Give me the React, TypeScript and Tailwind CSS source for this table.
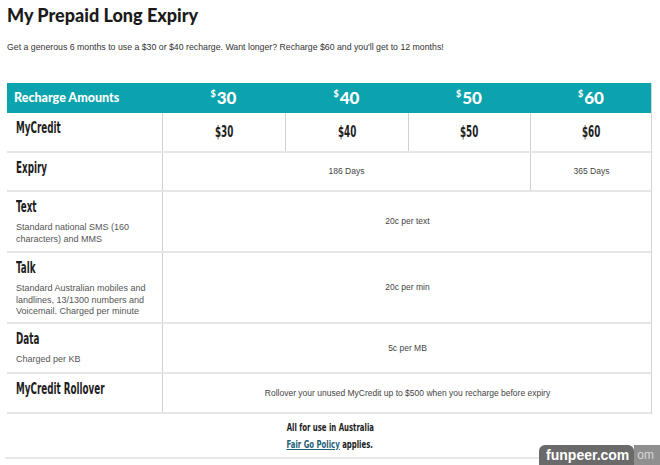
import React from "react";

interface Row {
  label: string;
  desc?: string[];
  value: string;
  h: string;
}

const amounts = ["30", "40", "50", "60"];

const rows: Row[] = [
  {
    label: "Text",
    desc: ["Standard national SMS (160", "characters) and MMS"],
    value: "20c per text",
    h: "h-[61px]",
  },
  {
    label: "Talk",
    desc: ["Standard Australian mobiles and", "landlines, 13/1300 numbers and", "Voicemail. Charged per minute"],
    value: "20c per min",
    h: "h-[71px]",
  },
  { label: "Data", desc: ["Charged per KB"], value: "5c per MB", h: "h-[50px]" },
];

const cond = "font-['DejaVu_Sans_Condensed','DejaVu_Sans',sans-serif] font-bold";
const body = "font-['Liberation_Sans',Arial,sans-serif]";

// 좁은 굵은 글씨 (라벨용)
const Label: React.FC<{ children: React.ReactNode }> = ({ children }) => (
  <div className={`whitespace-nowrap origin-left scale-x-[0.65] text-[15px] leading-[17px] text-[#1e1e1e] ${cond}`}>
    {children}
  </div>
);

const App: React.FC = () => {
  return (
    /*전체 페이지*/
    <div className={`relative w-[660px] h-[465px] bg-white overflow-hidden text-[#222] ${body}`}>
      <h1 className="pl-[7px] pt-[3px] text-[18px] leading-[24px] font-black text-[#1b1b1b] font-['Lato',sans-serif]">
        My Prepaid Long Expiry
      </h1>
      <p className="pl-[7px] mt-[14px] text-[8.75px] leading-[12px] text-[#333]">
        Get a generous 6 months to use a $30 or $40 recharge. Want longer? Recharge $60 and you'll get to 12 months!
      </p>

      {/*표 영역*/}
      <div className="ml-[7px] mt-[30px] w-[645px] border-r border-[#d4d4d4]">
        {/*헤더*/}
        <div className="grid grid-cols-[155px_123px_123px_122px_122px] h-[30px] bg-[#0ba3ad] text-white font-['Lato',sans-serif] font-black">
          <div className="flex items-center pl-[7px] text-[12.5px]">Recharge Amounts</div>
          {amounts.map((a) => (
            <div key={a} className="flex items-start justify-center pt-[5px]">
              <span className="text-[9px] leading-[10px] mt-[1px] mr-[1px]">$</span>
              <span className="text-[17px] leading-[20px]">{a}</span>
            </div>
          ))}
        </div>

        {/*MyCredit*/}
        <div className="grid grid-cols-[155px_123px_123px_122px_122px] h-[40px] border-b-2 border-[#e6e6e6]">
          <div className="pl-[9px] pt-[7px]">
            <Label>MyCredit</Label>
          </div>
          {amounts.map((a) => (
            <div key={a} className="border-l border-[#d0d0d0] flex items-center justify-center">
              <span className={`inline-block scale-x-[0.65] text-[15px] leading-[17px] text-[#1e1e1e] ${cond}`}>${a}</span>
            </div>
          ))}
        </div>

        {/*Expiry*/}
        <div className="grid grid-cols-[155px_368px_122px] h-[39px] border-b-2 border-[#e6e6e6]">
          <div className="pl-[9px] pt-[7px]">
            <Label>Expiry</Label>
          </div>
          <div className="border-l border-[#d0d0d0] flex items-center justify-center text-[8.5px] text-[#444]">186 Days</div>
          <div className="border-l border-[#d0d0d0] flex items-center justify-center text-[8.5px] text-[#444]">365 Days</div>
        </div>

        {rows.map((r) => (
          <div key={r.label} className={`grid grid-cols-[155px_490px] ${r.h} border-b-2 border-[#e6e6e6]`}>
            <div className="pl-[9px] pt-[7px]">
              <Label>{r.label}</Label>
              <div className="mt-[6px] text-[9px] leading-[11.5px] text-[#555]">
                {r.desc?.map((d) => (
                  <div key={d}>{d}</div>
                ))}
              </div>
            </div>
            <div className="border-l border-[#d0d0d0] flex items-center justify-center text-[8.5px] text-[#444]">{r.value}</div>
          </div>
        ))}

        {/*Rollover*/}
        <div className="grid grid-cols-[155px_490px] h-[40px] border-b-2 border-[#e6e6e6]">
          <div className="pl-[9px] pt-[7px]">
            <Label>MyCredit Rollover</Label>
          </div>
          <div className="border-l border-[#d0d0d0] flex items-center justify-center text-[8.5px] text-[#444]">
            Rollover your unused MyCredit up to $500 when you recharge before expiry
          </div>
        </div>
      </div>

      {/*하단 안내*/}
      <div className="mt-[7px] flex justify-center">
        <span className={`inline-block scale-x-[0.7] text-[11px] leading-[13px] text-[#222] ${cond}`}>All for use in Australia</span>
      </div>
      <div className="mt-[4px] flex justify-center">
        <span className={`inline-block scale-x-[0.7] text-[11px] leading-[13px] text-[#222] ${cond}`}>
          <span className="underline text-[#1f5f78]">Fair Go Policy</span> applies.
        </span>
      </div>
      <div className="ml-[5px] mt-[6px] w-[650px] border-b-2 border-[#e6e6e6]" />

      {/*워터마크*/}
      <div className="absolute right-0 bottom-0 flex items-end">
        <div className="flex items-center h-[20px] pl-[7px] pr-[5px] rounded-t-[6px] bg-[#6a6a6a] text-white font-bold text-[14px] font-['Liberation_Sans',Arial,sans-serif]">
          funpeer.com
        </div>
        <div className="flex items-center h-[20px] pl-[3px] pr-[6px] bg-[#8f8f8f] text-[#d8d8d8] text-[12px] font-['Liberation_Sans',Arial,sans-serif]">om</div>
      </div>
    </div>
  );
};

export default App;
